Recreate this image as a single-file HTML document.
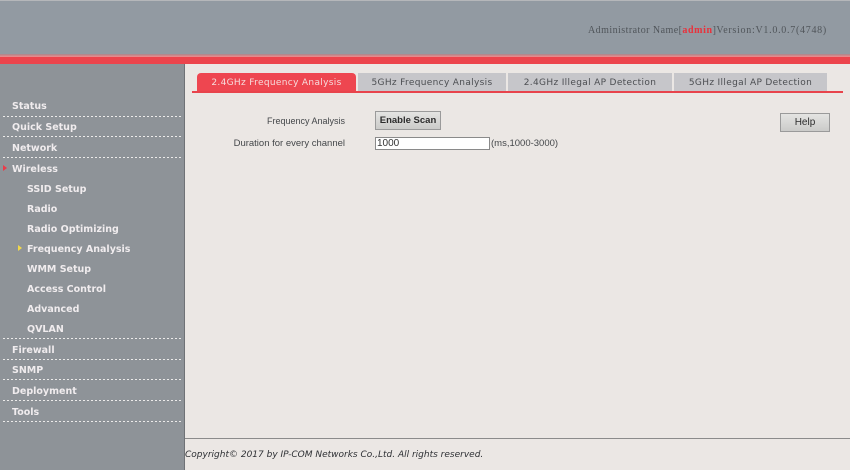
<!DOCTYPE html>
<html>
<head>
<meta charset="utf-8">
<style>
html,body{margin:0;padding:0;}
body{width:850px;height:470px;overflow:hidden;position:relative;background:#ebe7e4;font-family:"DejaVu Sans","Liberation Sans",sans-serif;}
.a{position:absolute;white-space:nowrap;}
#top{left:0;top:0;width:850px;height:54px;background:#929aa2;border-top:1px solid #b5b7ba;box-sizing:border-box;}
#r1{left:0;top:54px;width:850px;height:3px;background:linear-gradient(#a8868c,#f08a8c);}
#r2{left:0;top:57px;width:850px;height:7px;background:#ec444c;}
#side{left:0;top:64px;width:185px;height:406px;background:#8e9398;border-right:1px solid #6f7276;box-sizing:border-box;}
.m{font-size:9.5px;font-weight:bold;color:#f0ecee;letter-spacing:0;line-height:14px;}
.d{left:3px;width:180px;height:1px;background:repeating-linear-gradient(90deg,#ecebea 0 2px,transparent 2px 4px);}
.tab{top:73px;height:18px;background:#c6c6ca;color:#4c4e52;font-size:9px;letter-spacing:0.33px;line-height:20px;text-align:center;}
.l{font-family:"Liberation Sans",sans-serif;font-size:9.5px;color:#44474a;line-height:12px;text-align:right;}
.btn{box-sizing:border-box;background:linear-gradient(#e4e4e2,#cbcbc9);border:1px solid #9a9a9a;color:#2c2c2c;text-align:center;font-family:"Liberation Sans",sans-serif;}
</style>
</head>
<body>
<div class="a" id="top"></div>
<div class="a" id="r1"></div>
<div class="a" id="r2"></div>
<div class="a" style="left:588px;top:25px;font-family:'Liberation Serif','DejaVu Serif',serif;font-size:10px;letter-spacing:0.45px;color:#50555a;line-height:12px;">Administrator Name[<span style="color:#e8323c;font-weight:bold;letter-spacing:0.6px;">admin</span>]<span style="letter-spacing:0.72px;">Version:V1.0.0.7(4748)</span></div>

<div class="a" id="side"></div>
<div class="a m" style="left:12px;top:100px;">Status</div>
<div class="a d" style="top:116px;"></div>
<div class="a m" style="left:12px;top:121px;">Quick Setup</div>
<div class="a d" style="top:136px;"></div>
<div class="a m" style="left:12px;top:142px;">Network</div>
<div class="a d" style="top:157px;"></div>
<div class="a" style="left:3px;top:165px;width:0;height:0;border-left:4px solid #ec3a48;border-top:3.5px solid transparent;border-bottom:3.5px solid transparent;"></div>
<div class="a m" style="left:12px;top:163px;">Wireless</div>
<div class="a m" style="left:27px;top:183px;">SSID Setup</div>
<div class="a m" style="left:27px;top:203px;">Radio</div>
<div class="a m" style="left:27px;top:223px;">Radio Optimizing</div>
<div class="a" style="left:18px;top:245px;width:0;height:0;border-left:4px solid #f2d84a;border-top:3.5px solid transparent;border-bottom:3.5px solid transparent;"></div>
<div class="a m" style="left:27px;top:243px;">Frequency Analysis</div>
<div class="a m" style="left:27px;top:263px;">WMM Setup</div>
<div class="a m" style="left:27px;top:283px;">Access Control</div>
<div class="a m" style="left:27px;top:303px;">Advanced</div>
<div class="a m" style="left:27px;top:323px;">QVLAN</div>
<div class="a d" style="top:338px;"></div>
<div class="a m" style="left:12px;top:344px;">Firewall</div>
<div class="a d" style="top:359px;"></div>
<div class="a m" style="left:12px;top:364px;">SNMP</div>
<div class="a d" style="top:379px;"></div>
<div class="a m" style="left:12px;top:385px;">Deployment</div>
<div class="a d" style="top:400px;"></div>
<div class="a m" style="left:12px;top:406px;">Tools</div>
<div class="a d" style="top:421px;"></div>

<div class="a tab" style="left:197px;width:159px;background:#ee4650;color:#f6dcdc;border-radius:4px 4px 0 0;">2.4GHz Frequency Analysis</div>
<div class="a tab" style="left:358px;width:148px;">5GHz Frequency Analysis</div>
<div class="a tab" style="left:508px;width:164px;">2.4GHz Illegal AP Detection</div>
<div class="a tab" style="left:674px;width:153px;">5GHz Illegal AP Detection</div>
<div class="a" style="left:192px;top:91px;width:651px;height:2px;background:#e8444c;"></div>

<div class="a l" style="left:190px;top:115px;width:155px;font-size:9px;">Frequency Analysis</div>
<div class="a l" style="left:190px;top:138px;width:155px;">Duration for every channel</div>
<div class="a btn" style="left:375px;top:111px;width:66px;height:19px;line-height:18px;font-weight:bold;font-size:9.5px;letter-spacing:0;">Enable Scan</div>
<div class="a" style="left:375px;top:137px;width:115px;height:13px;box-sizing:border-box;background:#fff;border:1px solid #8a8a8a;font-family:'Liberation Sans',sans-serif;font-size:10px;line-height:11px;color:#333;padding-left:1px;">1000</div>
<div class="a l" style="left:491px;top:138px;text-align:left;">(ms,1000-3000)</div>
<div class="a btn" style="left:780px;top:113px;width:50px;height:19px;line-height:18px;font-size:10px;">Help</div>

<div class="a" style="left:185px;top:438px;width:665px;height:1px;background:#8b8b8b;"></div>
<div class="a" style="left:185px;top:449px;font-size:9px;font-style:italic;color:#2e3034;line-height:12px;">Copyright© 2017 by IP-COM Networks Co.,Ltd. All rights reserved.</div>
</body>
</html>
